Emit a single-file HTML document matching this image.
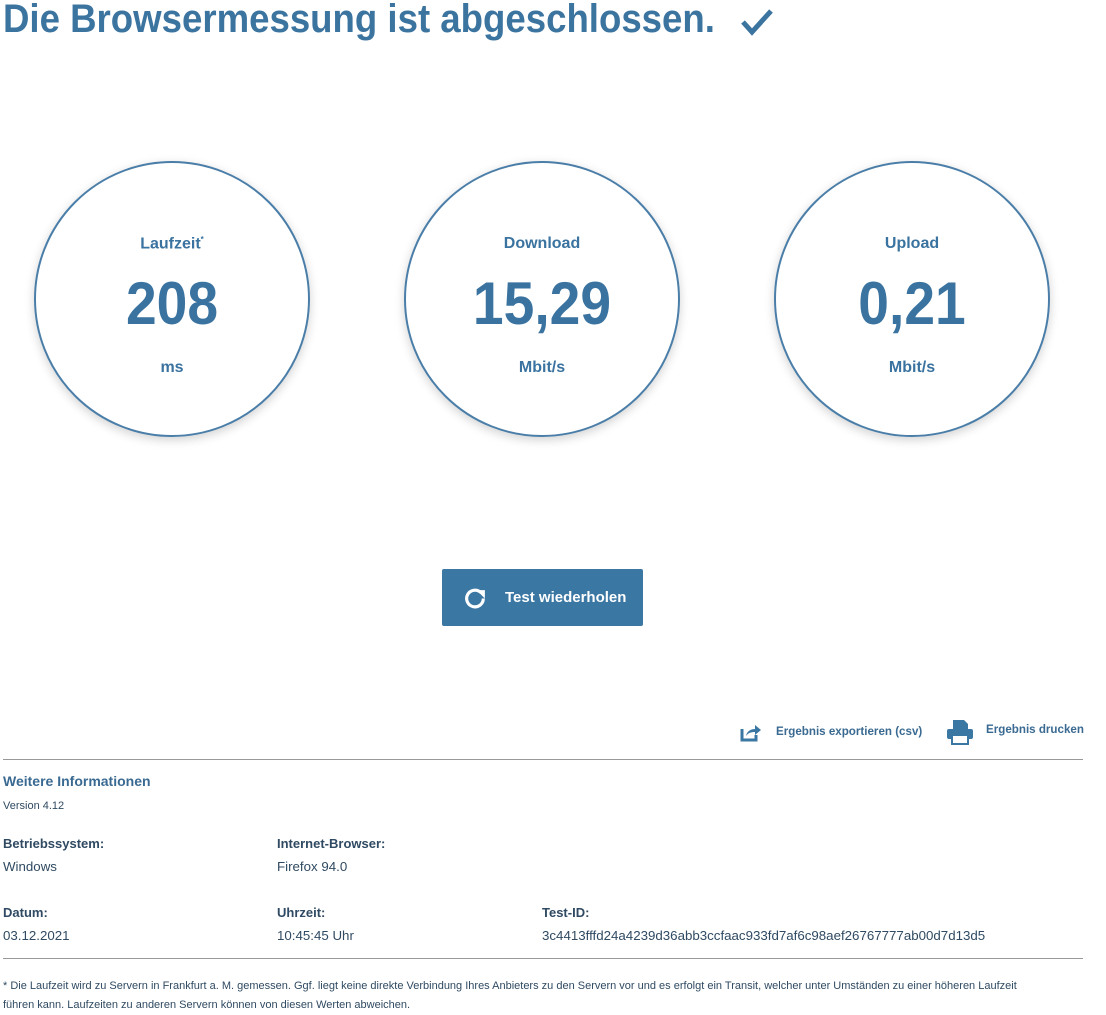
<!DOCTYPE html>
<html><head><meta charset="utf-8"><style>
body{margin:0;width:1106px;height:1015px;background:#fff;font-family:"Liberation Sans",sans-serif;color:#2f4a62;position:relative;overflow:hidden}
.a{position:absolute;white-space:nowrap}
h1{position:absolute;left:3px;top:-3px;margin:0;font-size:40px;font-weight:bold;color:#3c74a0;transform:scaleX(0.915);transform-origin:left top;white-space:nowrap}
.c{position:absolute;top:161px;width:272px;height:272px;border:2px solid #4a7ea8;border-radius:50%;box-shadow:0 3px 10px rgba(0,0,0,.18);color:#3a73a0;text-align:center}
.c .l{position:absolute;top:72px;width:100%;font-size:16px;font-weight:bold}
.c .v{position:absolute;top:106px;width:100%;font-size:60px;font-weight:bold;transform:scaleX(.92)}
.c .u{position:absolute;top:196px;width:100%;font-size:16px;font-weight:bold}
.btn{position:absolute;left:442px;top:569px;width:201px;height:57px;background:#3b77a3;border-radius:2px;color:#fff;font-weight:bold;font-size:15px}
.hd{font-weight:bold;font-size:13px;color:#2f4a62}
.tx{font-size:13.3px;color:#2f4a62}
.ln{position:absolute;left:3px;width:1080px;height:1px;background:#999}
</style></head><body>
<h1>Die Browsermessung ist abgeschlossen.</h1>
<svg class="a" style="left:740px;top:8px" width="34" height="28" viewBox="0 0 34 28"><path d="M3 14l9 10L31 3" fill="none" stroke="#3c74a0" stroke-width="5"/></svg>
<div class="c" style="left:34px"><div class="l">Laufzeit<sup style="font-size:8px">*</sup></div><div class="v">208</div><div class="u">ms</div></div>
<div class="c" style="left:404px"><div class="l">Download</div><div class="v">15,29</div><div class="u">Mbit/s</div></div>
<div class="c" style="left:774px"><div class="l">Upload</div><div class="v">0,21</div><div class="u">Mbit/s</div></div>
<div class="btn">
<svg style="position:absolute;left:21px;top:17px" width="25" height="25" viewBox="0 0 24 24"><path d="M19.5 12a8 8 0 1 1-2.5-5.8" fill="none" stroke="#fff" stroke-width="3"/><path d="M13 4h8v8z" fill="#fff"/></svg>
<span class="a" style="left:63px;top:20px">Test wiederholen</span></div>
<svg class="a" style="left:740px;top:724px" width="22" height="18" viewBox="0 0 22 18"><path d="M2 5v11h14v-5" fill="none" stroke="#3b77a3" stroke-width="3"/><path d="M6 12c1-5 5-7 9-7V1l6 5-6 5V8c-4 0-7 1-9 4z" fill="#3b77a3"/></svg>
<span class="a" style="left:776px;top:725px;font-size:11.6px;font-weight:bold;color:#3a6a92">Ergebnis exportieren (csv)</span>
<svg class="a" style="left:946px;top:719px" width="28" height="26" viewBox="0 0 28 26"><path d="M7 1h11l4 4v5H7z" fill="#3b77a3"/><rect x="1" y="10" width="26" height="10" rx="2" fill="#3b77a3"/><rect x="6" y="16" width="16" height="9" fill="#fff" stroke="#3b77a3" stroke-width="2"/></svg>
<span class="a" style="left:986px;top:723px;font-size:11.6px;font-weight:bold;color:#3a6a92">Ergebnis drucken</span>
<div class="ln" style="top:759px"></div>
<span class="a" style="left:3px;top:773px;font-size:14px;font-weight:bold;color:#3a6a92">Weitere Informationen</span>
<span class="a" style="left:3px;top:800px;font-size:11px">Version 4.12</span>
<span class="a hd" style="left:3px;top:836px">Betriebssystem:</span>
<span class="a tx" style="left:3px;top:859px">Windows</span>
<span class="a hd" style="left:277px;top:836px">Internet-Browser:</span>
<span class="a tx" style="left:277px;top:859px">Firefox 94.0</span>
<span class="a hd" style="left:3px;top:905px">Datum:</span>
<span class="a tx" style="left:3px;top:928px">03.12.2021</span>
<span class="a hd" style="left:277px;top:905px">Uhrzeit:</span>
<span class="a tx" style="left:277px;top:928px">10:45:45 Uhr</span>
<span class="a hd" style="left:542px;top:905px">Test-ID:</span>
<span class="a tx" style="left:542px;top:928px">3c4413fffd24a4239d36abb3ccfaac933fd7af6c98aef26767777ab00d7d13d5</span>
<div class="ln" style="top:958px"></div>
<div class="a" style="left:3px;top:977px;font-size:11px;line-height:19px">* Die Laufzeit wird zu Servern in Frankfurt a. M. gemessen. Ggf. liegt keine direkte Verbindung Ihres Anbieters zu den Servern vor und es erfolgt ein Transit, welcher unter Umständen zu einer höheren Laufzeit<br>führen kann. Laufzeiten zu anderen Servern können von diesen Werten abweichen.</div>
</body></html>
